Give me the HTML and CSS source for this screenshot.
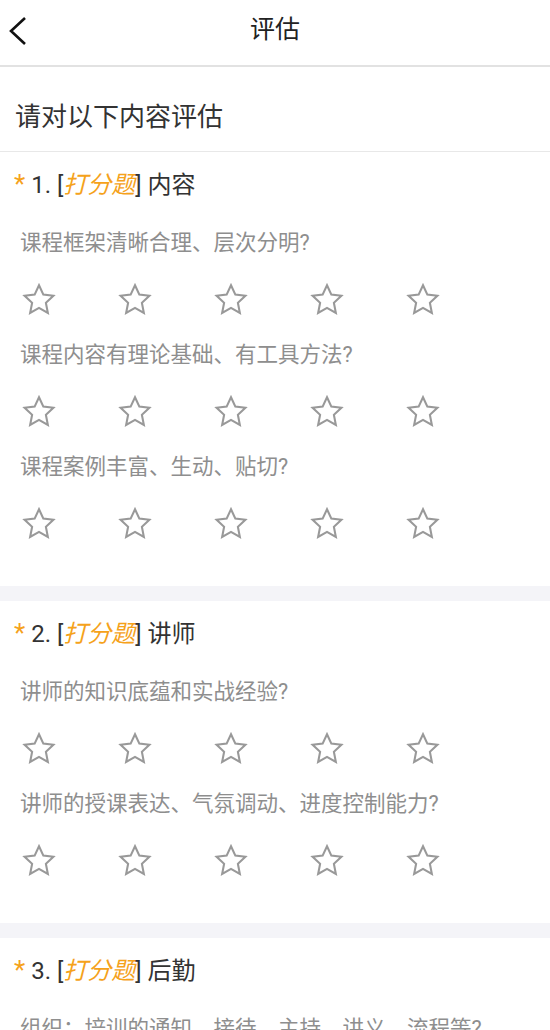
FILE: index.html
```html
<!DOCTYPE html>
<html lang="zh-CN">
<head>
<meta charset="utf-8">
<title>评估</title>
<link rel="stylesheet" href="styles.css">
</head>
<body>
<div class="page">
  <header class="topbar">
    <span class="back">
      <svg width="20" height="30" viewBox="0 0 20 30"><polyline points="17,2 3,15 17,28" fill="none" stroke="#111" stroke-width="2.6" stroke-linejoin="miter"/></svg>
    </span>
    <h1 class="topbar-title">评估</h1>
  </header>

  <div class="intro">请对以下内容评估</div>

  <section class="question">
    <div class="q-head"><span class="req">*</span> 1. [<span class="tag">打分题</span>] 内容</div>
    <div class="item">
      <div class="item-text">课程框架清晰合理、层次分明?</div>
      <div class="stars" data-n="5"></div>
    </div>
    <div class="item">
      <div class="item-text">课程内容有理论基础、有工具方法?</div>
      <div class="stars" data-n="5"></div>
    </div>
    <div class="item">
      <div class="item-text">课程案例丰富、生动、贴切?</div>
      <div class="stars" data-n="5"></div>
    </div>
  </section>

  <div class="band"></div>

  <section class="question">
    <div class="q-head"><span class="req">*</span> 2. [<span class="tag">打分题</span>] 讲师</div>
    <div class="item">
      <div class="item-text">讲师的知识底蕴和实战经验?</div>
      <div class="stars" data-n="5"></div>
    </div>
    <div class="item">
      <div class="item-text">讲师的授课表达、气氛调动、进度控制能力?</div>
      <div class="stars" data-n="5"></div>
    </div>
  </section>

  <div class="band"></div>

  <section class="question">
    <div class="q-head"><span class="req">*</span> 3. [<span class="tag">打分题</span>] 后勤</div>
    <div class="item">
      <div class="item-text">组织：培训的通知、接待、主持、讲义、流程等?</div>
      <div class="stars" data-n="5"></div>
    </div>
  </section>
</div>
<script>
  var svg = '<svg class="star" width="36" height="36" viewBox="0 0 24 24"><polygon points="12,2.2 14.9,8.4 21.6,9.2 16.6,13.9 17.9,20.6 12,17.3 6.1,20.6 7.4,13.9 2.4,9.2 9.1,8.4" fill="none" stroke="#999" stroke-width="1.4" stroke-linejoin="miter"/></svg>';
  document.querySelectorAll('.stars').forEach(function (el) {
    var n = +el.getAttribute('data-n'), h = '';
    for (var i = 0; i < n; i++) h += svg;
    el.innerHTML = h;
  });
</script>
</body>
</html>
```

FILE: styles.css
```css
* { box-sizing: border-box; }
html, body { margin: 0; padding: 0; background: #fff; }
body {
  font-family: Roboto, "Noto Sans CJK SC", sans-serif;
  color: #333;
}
.page { width: 550px; overflow: hidden; }

.topbar {
  height: 67px;
  border-bottom: 2px solid #e2e2e2;
  display: flex;
  align-items: center;
  justify-content: center;
  position: relative;
}
.back {
  position: absolute;
  left: 8px;
  top: 16px;
  display: flex;
}
.topbar-title {
  margin: 0;
  font-size: 25px;
  font-weight: 400;
  color: #222;
  line-height: 36px;
  margin-top: -6px;
}

.intro {
  padding: 32px 15px 16px;
  font-size: 26px;
  line-height: 36px;
  color: #333;
  border-bottom: 1px solid #e8e8e8;
}

.question { padding: 14px 0 34px; }
.q-head {
  padding-left: 14px;
  font-size: 24px;
  line-height: 38px;
  height: 38px;
  color: #333;
  margin-bottom: 12px;
  white-space: nowrap;
}
.req { color: #f5a21b; font-size: 26px; line-height: 0; }
.tag { color: #f5a21b; font-style: italic; }

.item { padding-top: 13px; }
.item-text {
  padding-left: 20px;
  font-size: 21.5px;
  line-height: 28px;
  height: 28px;
  color: #8e8e8e;
  white-space: nowrap;
}
.stars {
  margin-top: 15px;
  height: 56px;
  display: flex;
  align-items: center;
  gap: 60px;
  padding-left: 21px;
}
.star { display: block; }

.band { height: 15px; background: #f4f4f8; }
```
